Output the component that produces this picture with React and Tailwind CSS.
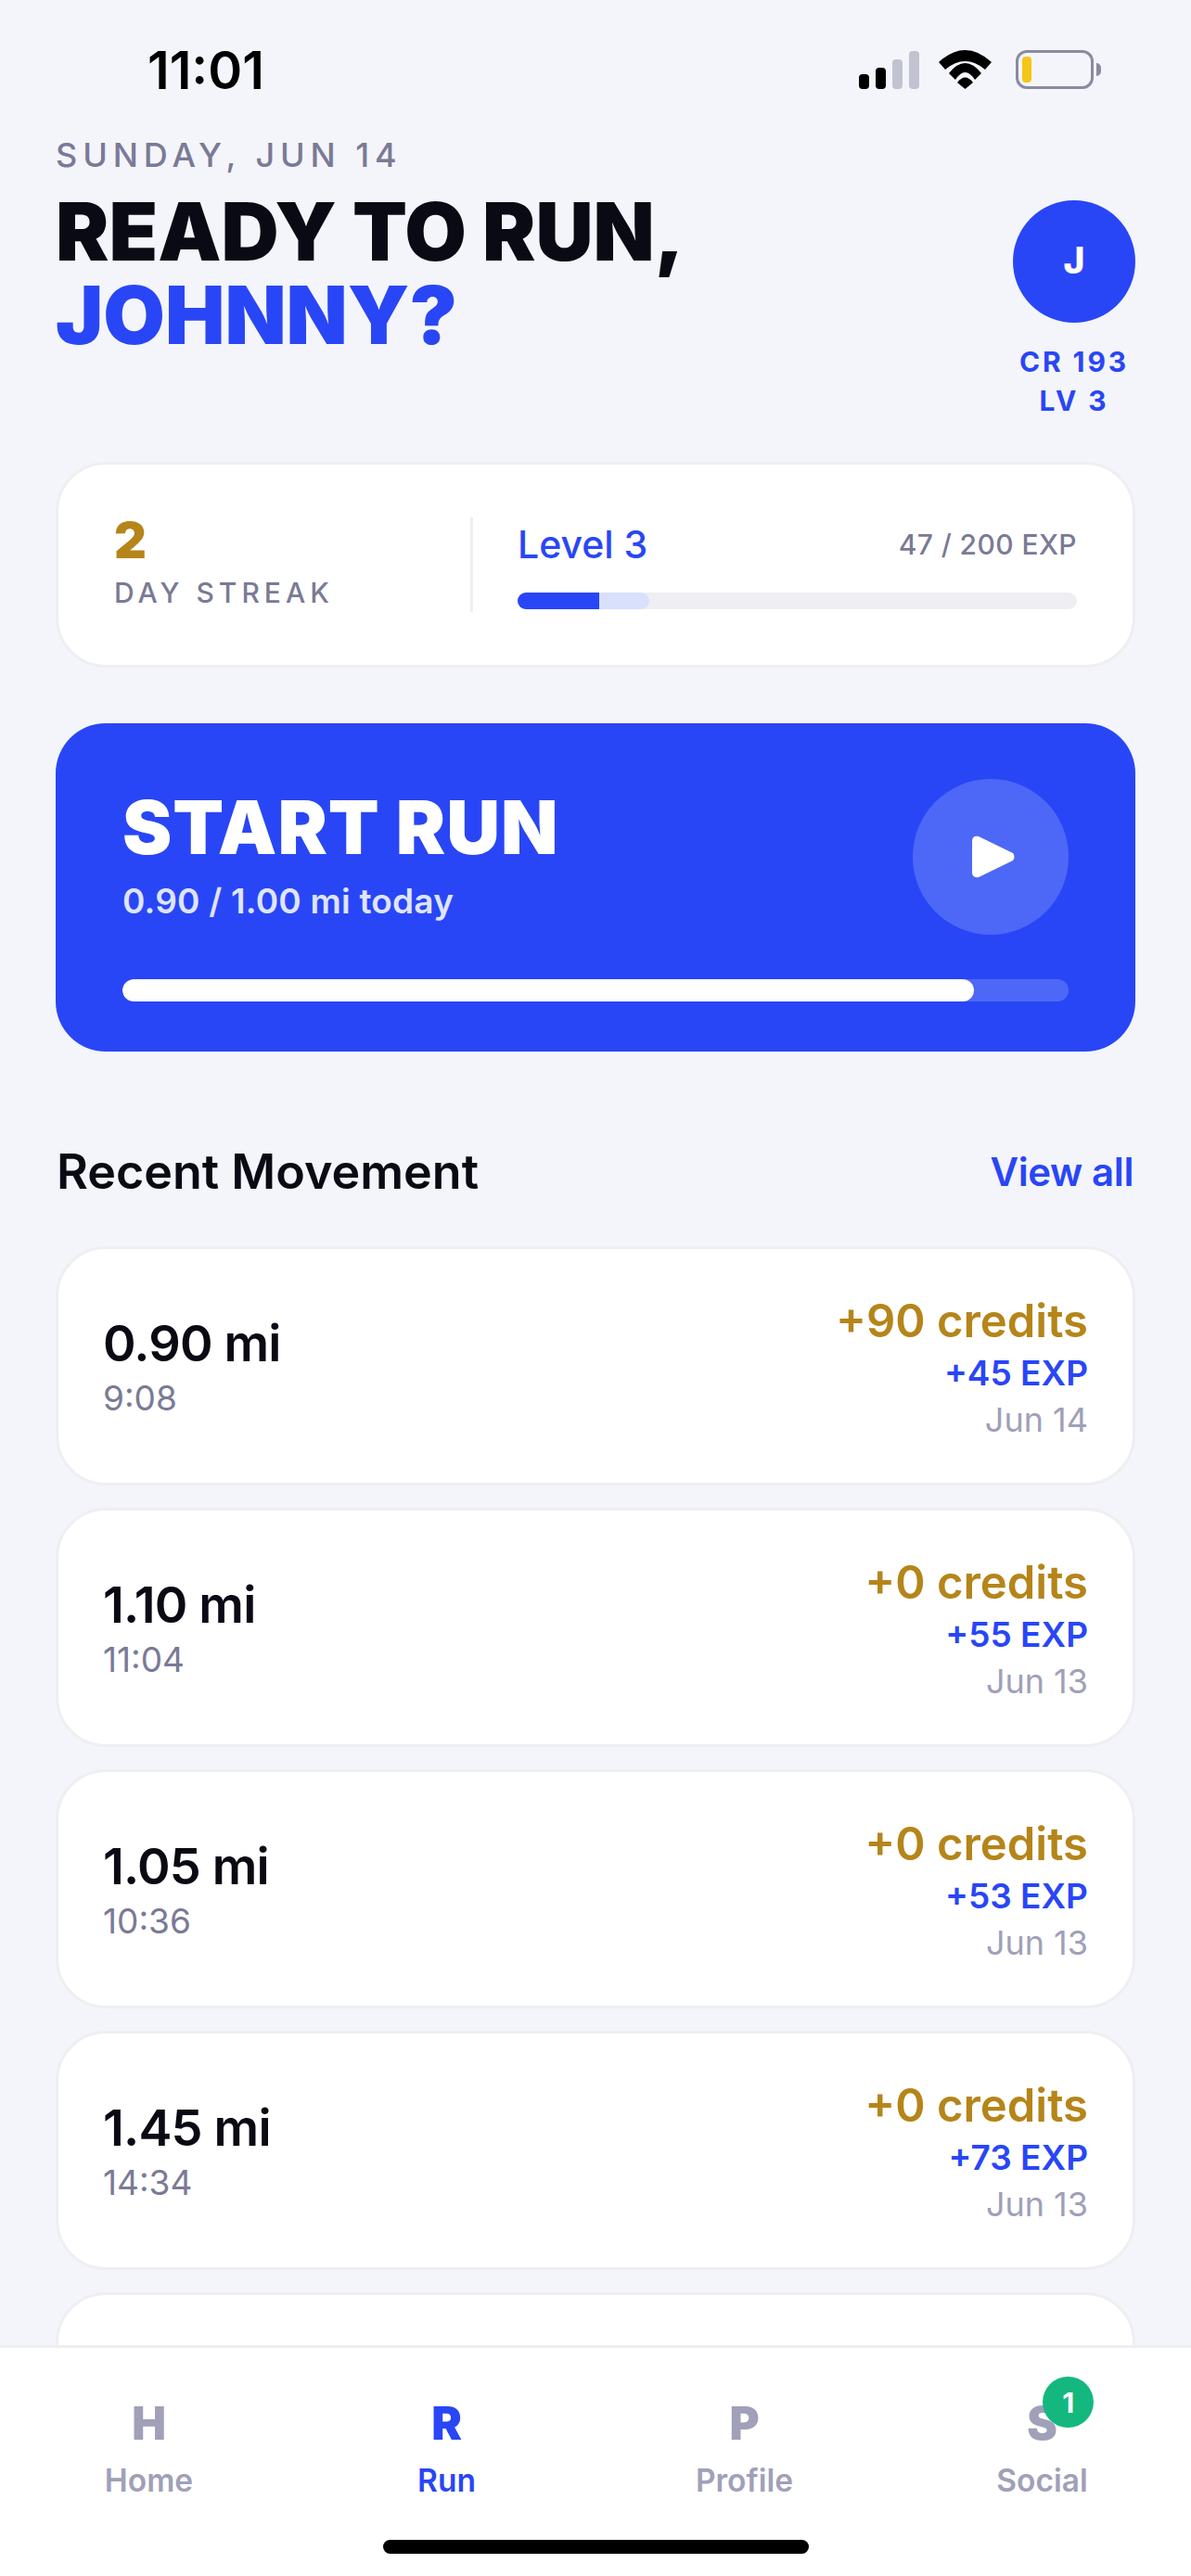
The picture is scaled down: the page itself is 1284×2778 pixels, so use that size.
const runs = [
  { dist: "0.90 mi", time: "9:08", credits: "+90 credits", exp: "+45 EXP", date: "Jun 14" },
  { dist: "1.10 mi", time: "11:04", credits: "+0 credits", exp: "+55 EXP", date: "Jun 13" },
  { dist: "1.05 mi", time: "10:36", credits: "+0 credits", exp: "+53 EXP", date: "Jun 13" },
  { dist: "1.45 mi", time: "14:34", credits: "+0 credits", exp: "+73 EXP", date: "Jun 13" },
];

const tabs = [
  { letter: "H", label: "Home" },
  { letter: "R", label: "Run", active: true },
  { letter: "P", label: "Profile" },
  { letter: "S", label: "Social", badge: 1 },
];

// Status bar icons
const Signal = () => (
  <svg width="65" height="41" viewBox="0 0 65 41">
    <rect x="0" y="25" width="11" height="16" rx="4" fill="#000" />
    <rect x="18" y="18" width="11" height="23" rx="4" fill="#000" />
    <rect x="36" y="9" width="11" height="32" rx="4" fill="#c2c3d0" />
    <rect x="54" y="0" width="11" height="41" rx="4" fill="#c2c3d0" />
  </svg>
);

const Wifi = () => (
  <svg width="57" height="42" viewBox="0 0 57 42">
    <path d="M0 13Q28.5 -13 57 13L50 21Q28.5 3 7 21Z" fill="#000" />
    <path d="M11 25Q28.5 3 46 25L39 32Q28.5 16 18 32Z" fill="#000" />
    <path d="M20 35Q28.5 24 37 35L28.5 42Z" fill="#000" />
  </svg>
);

const Battery = () => (
  <div className="ml-[5px] flex items-center gap-[3px]">
    <div className="flex h-[42px] w-[84px] items-center rounded-[12px] border-[3px] border-[#8a8aa2] pl-[4px]">
      <div className="h-[28px] w-[10px] rounded-[4px] bg-[#f5c518]" />
    </div>
    <div className="h-[14px] w-[5px] rounded-r-full bg-[#8a8aa2]" />
  </div>
);

function RunRow({ run }) {
  return (
    <div className="flex h-[258px] shrink-0 items-center justify-between rounded-[54px] border-[3px] border-[#eeeef3] bg-white px-[48px]">
      <div>
        <div className="text-[54px] leading-[66px] font-semibold tracking-[-0.8px] text-[#0a0a14]">{run.dist}</div>
        <div className="mt-[4px] text-[37px] leading-[44px] text-[#7a7a96]">{run.time}</div>
      </div>
      <div className="pt-[5px] text-right">
        <div className="text-[49px] leading-[56px] font-semibold text-[#b5851a]">{run.credits}</div>
        <div className="mt-[4px] text-[37px] leading-[48px] font-semibold text-[#2946f6]">{run.exp}</div>
        <div className="mt-[2px] text-[36px] leading-[48px] text-[#a0a0b8]">{run.date}</div>
      </div>
    </div>
  );
}

export default function App() {
  return (
    <div className="flex h-[2778px] w-[1284px] flex-col overflow-hidden bg-[#f4f5fb] font-['Inter',sans-serif]">
      <div className="min-h-0 flex-1 overflow-hidden px-[60px]">
        {/* status bar */}
        <div className="flex h-[147px] items-start justify-between pt-[46px]">
          <div className="pl-[99px] text-[56px] leading-[60px] font-semibold text-black">11:01</div>
          <div className="flex items-center gap-[21px] pt-[8px] pr-[37px]">
            <Signal />
            <Wifi />
            <Battery />
          </div>
        </div>

        {/* header */}
        <div className="flex items-start justify-between">
          <div>
            <div className="text-[36px] leading-[40px] font-medium tracking-[5.9px] text-[#7a7a96]">SUNDAY, JUN 14</div>
            <div className="mt-[18px] text-[86px] leading-[90px] font-black text-[#0a0a14]">READY TO RUN,</div>
            <div className="text-[86px] leading-[90px] font-black text-[#2946f6]">JOHNNY?</div>
          </div>
          <div className="flex w-[132px] flex-col items-center pt-[69px]">
            <div className="flex h-[132px] w-[132px] shrink-0 items-center justify-center rounded-full bg-[#2946f6] pb-[2px] text-[39px] font-extrabold text-white">J</div>
            <div className="mt-[21px] text-center text-[30px] leading-[42px] font-bold tracking-[2.9px] whitespace-nowrap text-[#2946f6]">CR 193</div>
            <div className="text-center text-[30px] leading-[42px] font-bold tracking-[2.9px] whitespace-nowrap text-[#2946f6]">LV 3</div>
          </div>
        </div>

        {/* streak and level */}
        <div className="mt-[45px] flex h-[222px] items-center rounded-[54px] border-[3px] border-[#eeeef3] bg-white pr-[60px] pl-[60px]">
          <div className="w-[384px] shrink-0 pb-[6px]">
            <div className="mt-[-3px] text-[54px] leading-[60px] font-black text-[#b5851a]">2</div>
            <div className="mt-[8px] text-[30px] leading-[36px] font-medium tracking-[5px] text-[#7a7a96]">DAY STREAK</div>
          </div>
          <div className="h-[102px] w-[3px] shrink-0 bg-[#eeeef3]" />
          <div className="ml-[48px] flex-1">
            <div className="flex items-center justify-between">
              <div className="text-[41px] leading-[50px] font-medium text-[#2946f6]">Level 3</div>
              <div className="text-[30px] leading-[50px] font-medium tracking-[0.4px] text-[#7a7a96]">47 / 200 EXP</div>
            </div>
            <div className="relative mt-[27px] h-[18px] overflow-hidden rounded-full bg-[#eeeef3]">
              <div className="absolute inset-y-0 left-0 w-[142px] rounded-full bg-[#d8e0fc]" />
              <div className="absolute inset-y-0 left-0 w-[88px] bg-[#2946f6]" />
            </div>
          </div>
        </div>

        {/* start run */}
        <div className="mt-[60px] h-[354px] rounded-[54px] bg-[#2946f6] px-[72px] pt-[60px]">
          <div className="flex items-start justify-between">
            <div className="pt-[8px]">
              <div className="text-[80px] leading-[88px] font-black tracking-[1px] text-white">START RUN</div>
              <div className="mt-[12px] text-[37px] leading-[48px] font-semibold tracking-[0.2px] text-[#dfe4fe]">0.90 / 1.00 mi today</div>
            </div>
            <div className="flex h-[168px] w-[168px] items-center justify-center rounded-full bg-[#4d68f7]">
              <svg width="48" height="46" viewBox="0 0 48 46" className="ml-[6px]">
                <path d="M8 1L45 19Q48 23 45 27L8 45Q1 46 1 40V6Q1 0 8 1Z" fill="#fff" />
              </svg>
            </div>
          </div>
          <div className="mt-[48px] h-[24px] overflow-hidden rounded-full bg-[#4d68f7]">
            <div className="h-full w-[90%] rounded-full bg-white" />
          </div>
        </div>

        {/* recent movement */}
        <div className="mt-[92px] flex items-center justify-between pr-[2px]">
          <div className="pl-[1px] text-[52px] leading-[76px] font-semibold text-[#0a0a14]">Recent Movement</div>
          <div className="text-[42px] leading-[76px] font-semibold tracking-[-0.4px] text-[#2946f6]">View all</div>
        </div>
        <div className="mt-[42px] flex flex-col gap-[24px]">
          {runs.map((run) => (
            <RunRow key={run.dist} run={run} />
          ))}
          <div className="h-[258px] shrink-0 rounded-[54px] border-[3px] border-[#eeeef3] bg-white" />
        </div>
      </div>

      {/* tab bar */}
      <div className="h-[249px] shrink-0 border-t-[3px] border-[#eeeef3] bg-white">
        <div className="grid grid-cols-4 pt-[54px]">
          {tabs.map((tab) => (
            <div key={tab.label} className="flex flex-col items-center">
              <div className={`relative text-[49px] leading-[56px] font-black ${tab.active ? "text-[#2946f6]" : "text-[#a0a0b8]"}`}>
                {tab.letter}
                {tab.badge && (
                  <span className="absolute top-[-23px] left-[17px] flex h-[55px] w-[55px] items-center justify-center rounded-full bg-[#14b87e] text-[30px] leading-none font-bold text-white">
                    {tab.badge}
                  </span>
                )}
              </div>
              <div className={`mt-[11px] text-[33.5px] leading-[44px] font-semibold ${tab.active ? "text-[#2946f6]" : "text-[#a0a0b8]"}`}>{tab.label}</div>
            </div>
          ))}
        </div>
        <div className="mx-auto mt-[42px] h-[15px] w-[459px] rounded-full bg-black" />
      </div>
    </div>
  );
}
